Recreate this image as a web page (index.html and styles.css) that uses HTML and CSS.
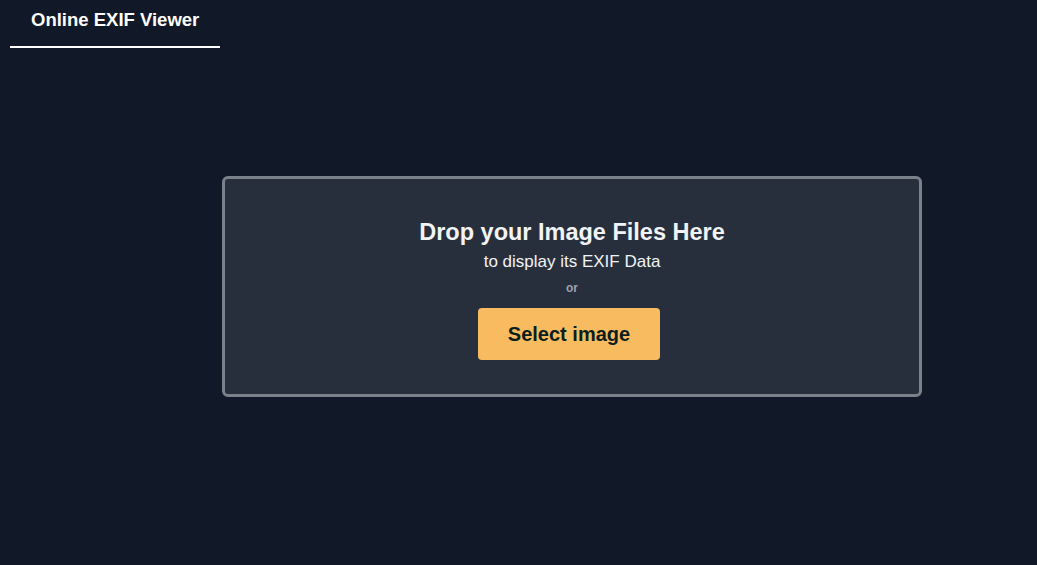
FILE: index.html
```html
<!DOCTYPE html>
<html>
	<head>
		<meta charset="UTF-8">
		<title>Online EXIF Viewer</title>
		<link rel="stylesheet" href="styles.css">
	</head>
	<body>
		<!--顶部标签-->
		<div class="tabs">
			<div class="tab active">Online EXIF Viewer</div>
		</div>
		<!--拖放区-->
		<div class="main">
			<div class="dropZone">
				<h2 class="title">Drop your Image Files Here</h2>
				<p class="sub">to display its EXIF Data</p>
				<p class="or">or</p>
				<button class="selectBtn">Select image</button>
			</div>
		</div>
	</body>
</html>
```

FILE: styles.css
```css
*{
	margin: 0;
	padding: 0;
	box-sizing: border-box;
}
body{
	background: #111827;
	font-family: "Liberation Sans", Arial, sans-serif;
	color: #fff;
	height: 565px;
	overflow: hidden;
}
.tabs{
	display: flex;
	padding: 0 10px;
}
.tab{
	width: 210px;
	height: 48px;
	padding-top: 9px;
	padding-left: 21px;
	font-size: 18.5px;
	line-height: 21px;
	font-weight: bold;
	border-bottom: 2px solid #fff;
}
.main{
	padding: 128px 0 0 222px;
}
.dropZone{
	width: 700px;
	height: 221px;
	background: #282f3c;
	border: 3px solid #7b818b;
	border-radius: 6px;
	display: flex;
	flex-direction: column;
	align-items: center;
	padding-top: 39px;
}
.title{
	font-size: 23.5px;
	line-height: 28px;
	font-weight: bold;
	color: #f1f3f6;
}
.sub{
	margin-top: 6px;
	font-size: 17px;
	line-height: 20px;
	color: #f1f3f6;
}
.or{
	margin-top: 9px;
	font-size: 12px;
	line-height: 14px;
	font-weight: bold;
	color: #9ca3af;
}
.selectBtn{
	margin: 13px 6px 0 0;
	width: 182px;
	height: 52px;
	background: #f9bb5f;
	border: none;
	border-radius: 4px;
	font-family: inherit;
	font-size: 20px;
	font-weight: bold;
	color: #0a1f1d;
	cursor: pointer;
}
```
